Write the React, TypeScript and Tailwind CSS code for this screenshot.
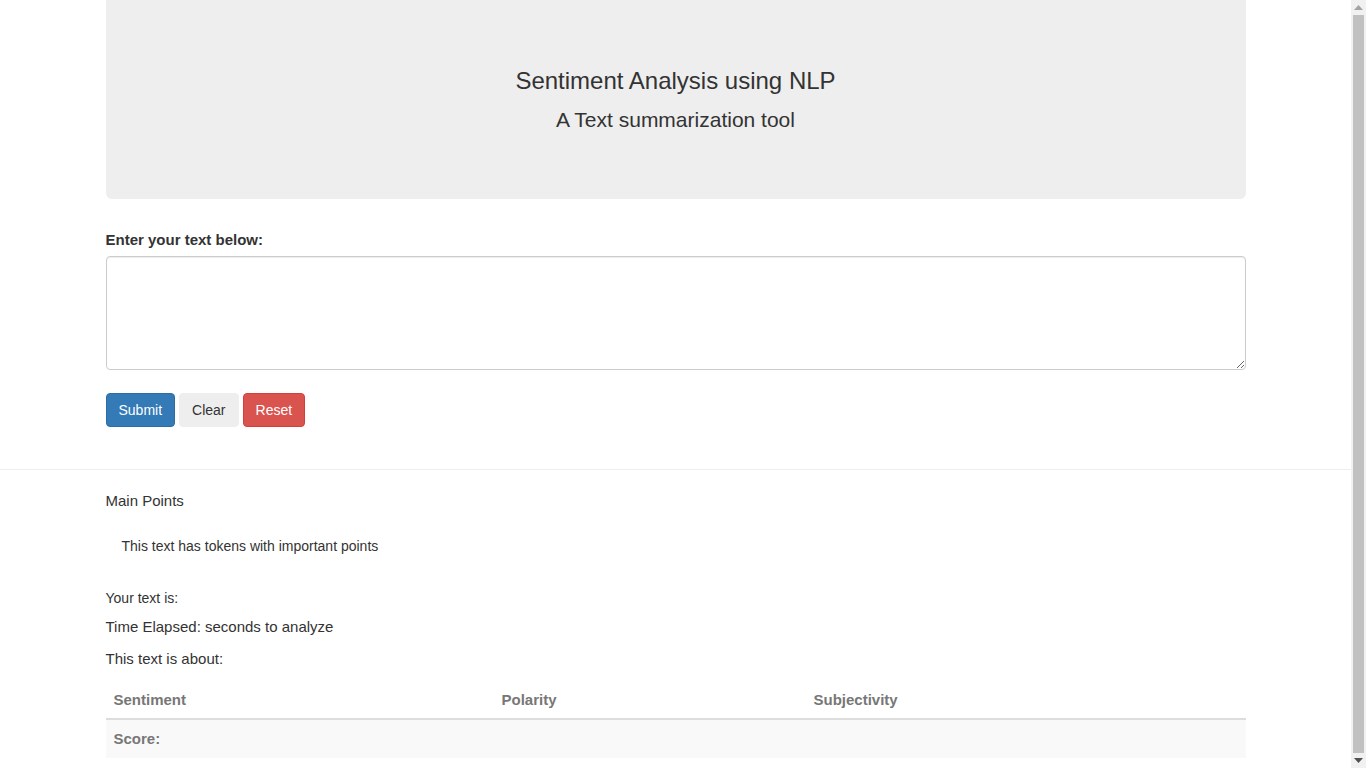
function Scrollbar() {
  return (
    <div className="flex h-screen w-[15px] shrink-0 flex-col items-center bg-[#f1f1f1]">
      <div className="flex h-[15px] w-full items-center justify-center">
        <svg width="9" height="5" viewBox="0 0 9 5">
          <path d="M4.5 0L9 5H0z" fill="#a3a3a3" />
        </svg>
      </div>
      <div className="w-[11px] flex-1 bg-[#c1c1c1]" />
      <div className="flex h-[15px] w-full items-center justify-center">
        <svg width="9" height="5" viewBox="0 0 9 5">
          <path d="M0 0H9L4.5 5z" fill="#505050" />
        </svg>
      </div>
    </div>
  );
}

export default function App() {
  return (
    <div className="flex h-screen overflow-hidden bg-white text-[#333] font-['Liberation_Sans',Arial,sans-serif] text-[14px] leading-[20px]">
      <div className="min-w-0 flex-1">
        <div className="mx-auto w-[1140px]">
          {/* Jumbotron */}
          <div className="h-[199px] rounded-b-[6px] bg-[#eee] pt-[68px] text-center">
            <h3 className="text-[24px] leading-[26px]">Sentiment Analysis using NLP</h3>
            <h4 className="mt-[14px] text-[21px] leading-[24px]">A Text summarization tool</h4>
          </div>

          {/* Form */}
          <form className="mt-[31px]">
            <label className="block text-[15px] font-bold leading-[20px]">Enter your text below:</label>
            <textarea className="mt-[6px] block h-[114px] w-full resize-y rounded-[4px] border border-[#ccc] px-3 py-[6px] shadow-[inset_0_1px_1px_rgba(0,0,0,0.075)] outline-none" />
            <div className="mt-[23px] flex gap-[4px]">
              <button type="button" className="h-[34px] rounded-[4px] border border-[#2e6da4] bg-[#337ab7] px-3 text-[14px] text-white">
                Submit
              </button>
              <button type="button" className="h-[34px] rounded-[4px] border border-[#eee] bg-[#eee] px-3 text-[14px] text-[#333]">
                Clear
              </button>
              <button type="button" className="h-[34px] rounded-[4px] border border-[#d43f3a] bg-[#d9534f] px-3 text-[14px] text-white">
                Reset
              </button>
            </div>
          </form>
        </div>

        <hr className="mt-[42px] border-t border-[#eee]" />

        <div className="mx-auto w-[1140px]">
          <p className="mt-[20px] text-[15px] leading-[21px]">Main Points</p>
          <p className="mt-[25px] pl-[16px] text-[14px] leading-[20px]">This text has tokens with important points</p>

          <p className="mt-[32px] text-[14px] leading-[20px]">Your text is:</p>
          <p className="mt-[8px] text-[15px] leading-[21px]">Time Elapsed: seconds to analyze</p>
          <p className="mt-[11px] text-[15px] leading-[21px]">This text is about:</p>

          <table className="mt-[13px] w-full border-collapse text-left text-[15px] text-[#777]">
            <thead>
              <tr className="border-b-2 border-[#ddd]">
                <th className="w-[388px] px-2 py-2 leading-[20px]">Sentiment</th>
                <th className="w-[312px] px-2 py-2 leading-[20px]">Polarity</th>
                <th className="px-2 py-2 leading-[20px]">Subjectivity</th>
              </tr>
            </thead>
            <tbody>
              <tr className="bg-[#f9f9f9]">
                <th className="px-2 py-[9px] leading-[20px]">Score:</th>
                <td className="px-2 py-[9px]"></td>
                <td className="px-2 py-[9px]"></td>
              </tr>
            </tbody>
          </table>
        </div>
      </div>
      <Scrollbar />
    </div>
  );
}
